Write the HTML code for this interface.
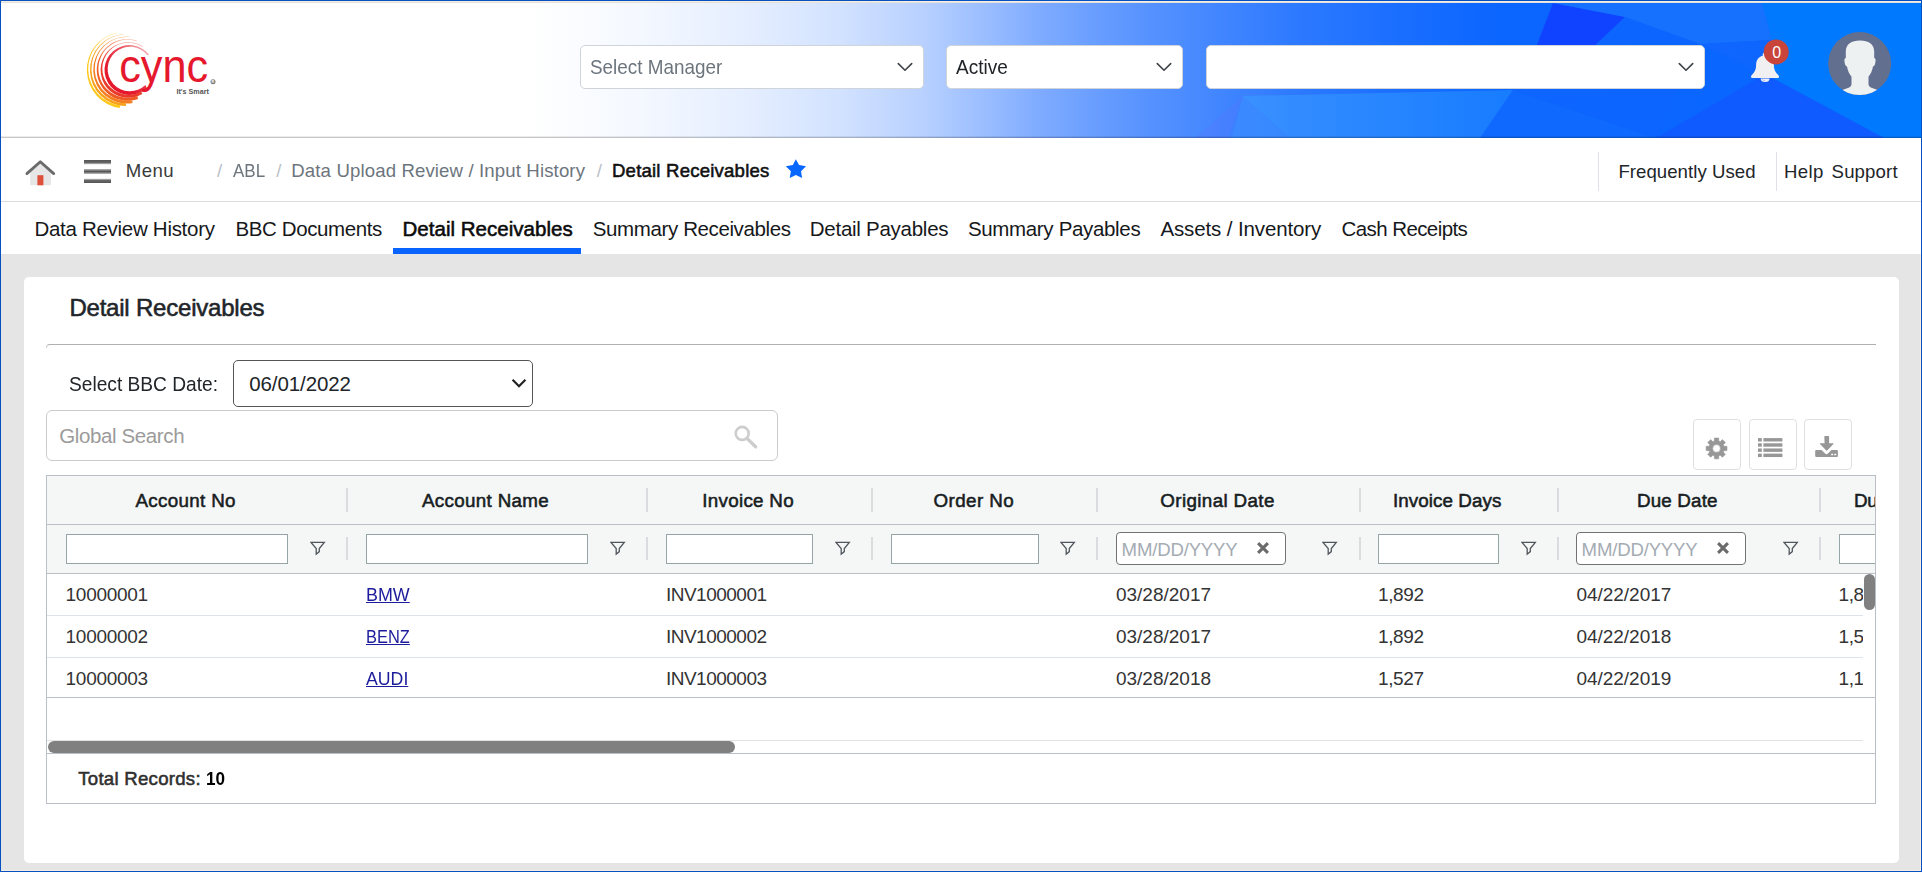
<!DOCTYPE html>
<html lang="en">
<head>
<meta charset="utf-8">
<title>Detail Receivables</title>
<style>
*{box-sizing:border-box;margin:0;padding:0}
html,body{width:1922px;height:872px;overflow:hidden}
body{position:relative;background:#f6eee3;font-family:"Liberation Sans",sans-serif;color:#212529}
.abs,.t{position:absolute}
.t{white-space:nowrap;line-height:1}
/* frame */
#frame{left:0;top:0;width:1922px;height:872px;border:1px solid #0551c2;z-index:50;pointer-events:none}
#page{left:1px;top:254px;width:1919px;height:616px;background:#e5e5e5}
/* header */
#hdr{left:1px;top:3px;width:1920px;height:135px;background:linear-gradient(90deg,#ffffff 0%,#ffffff 27.5%,#f4f8ff 33.3%,#e6efff 38.5%,#d2e2ff 43.7%,#b9d1ff 47.9%,#98bcff 51.5%,#7fabff 54.1%,#6b9fff 56.7%,#5994ff 59.3%,#4a8bff 61.9%,#3d83ff 64.3%,#2c79ff 67.7%,#1a6eff 72.9%,#0b66ff 78%,#0866ff 100%);overflow:hidden}
#hdr-line{left:1px;top:136px;width:1920px;height:2px;background:linear-gradient(rgba(0,0,0,.08) 50%,rgba(0,0,0,.22) 50%)}
.sel{background:#fff;border:1px solid #ced4da;border-radius:5px}
/* nav */
#nav{left:1px;top:138px;width:1920px;height:63px;background:#fff}
#nav-line{left:1px;top:201px;width:1920px;height:1px;background:#dcdcdc}
#tabs{left:1px;top:202px;width:1920px;height:52px;background:#fff}
#tab-ul{left:393px;top:248px;width:188px;height:6px;background:#0863ff}
.vsep{width:1px;background:#dee2e6}
/* card */
#card{left:24px;top:277px;width:1875px;height:586px;background:#fff;border-radius:5px}
#hr{left:46px;top:344px;width:1830px;height:4px;border-top:1px solid #b0b0b0;border-left:1px solid #c9c9c9;border-top-left-radius:5px}
#bbc{left:233px;top:360px;width:300px;height:47px;border:1px solid #555;border-radius:5px;background:#fff}
#gs{left:46px;top:410px;width:732px;height:51px;border:1px solid #cbcbcb;border-radius:6px;background:#fff}
.tbtn{top:419px;width:48px;height:51px;border:1px solid #e0e0e0;border-radius:4px;background:#fff}
/* grid */
#grid{left:46px;top:475px;width:1830px;height:329px;border:1px solid #babfc7;background:#fff;overflow:hidden}
#ghead{left:0;top:0;width:1828px;height:97px;background:#f5f7f7}
.hline{left:0;width:1828px;height:1px;background:#babfc7}
.rline{left:0;width:1816px;height:1px;background:#dde2eb}
.csep{width:2px;background:#d9dde0}
.fin{height:30px;top:58px;border:1px solid #95a5a6;background:#fff}
.din{height:33px;top:56px;border:1px solid #737373;border-radius:4px;background:#fff}
.hd{font-weight:700;font-size:18px;color:#181d1f}
.cell{font-size:17.6px;color:#2b2b2b}
a.cell{color:#2a2aa8;text-decoration:underline}
.ph{font-size:18.4px;color:#a9abb0}
</style>
</head>
<body>
<div id="page" class="abs"></div>
<div class="abs" style="left:1px;top:2px;width:1920px;height:1px;background:#e4e1dc"></div>
<!-- HEADER -->
<div id="hdr" class="abs">
<svg class="abs" style="left:0;top:0" width="1920" height="135" viewBox="1 3 1920 135"><defs>
<linearGradient id="pg1" gradientUnits="userSpaceOnUse" x1="1243" y1="0" x2="1513" y2="0"><stop offset="0" stop-color="#3a93ff"/><stop offset="1" stop-color="#1a80ff"/></linearGradient>
</defs>
<polygon points="1553,3 1625,17 1590,50 1535,50" fill="#1040ff" opacity="0.92"/>
<polygon points="1625,17 1553,3 1762,3 1772,40 1700,44" fill="#1f78ff" opacity="0.6"/>
<polygon points="1625,17 1700,44 1656,138 1513,90 1590,50" fill="#1163ff" opacity="0.45"/>
<polygon points="1243,96 1513,90 1480,138 1232,138" fill="url(#pg1)" opacity="0.85"/>
<polygon points="1243,96 1228,138 1195,138" fill="#5b74ff" opacity="0.28"/>
<polygon points="1243,96 1290,138 1228,138" fill="#3b7fff" opacity="0.35"/>
<polygon points="1513,90 1656,138 1480,138" fill="#146cff" opacity="0.45"/>
<polygon points="1762,3 1921,3 1921,138 1884,138 1765,74 1772,40" fill="#007bff" opacity="0.9"/>
<polygon points="1765,74 1884,138 1656,138" fill="#1259ff" opacity="0.85"/>
<polygon points="1700,44 1772,40 1765,74" fill="#1466ff" opacity="0.6"/></svg>
</div>
<div id="hdr-line" class="abs"></div>
<svg class="abs" style="left:80px;top:26px" width="140" height="90" viewBox="80 26 140 90">
<defs><linearGradient id="lgf" gradientUnits="userSpaceOnUse" x1="150" y1="34" x2="112" y2="72"><stop offset="0" stop-color="#fff" stop-opacity="0.05"/><stop offset="0.55" stop-color="#fff" stop-opacity="0.75"/><stop offset="1" stop-color="#fff" stop-opacity="1"/></linearGradient><mask id="lgm" maskUnits="userSpaceOnUse" x="80" y="26" width="140" height="90"><rect x="80" y="26" width="140" height="90" fill="url(#lgf)"/></mask></defs>
<path d="M149.02 54.67 A24.90 24.90 0 1 0 146.70 87.91 L145.41 85.07 A22.30 22.30 0 1 1 147.49 55.30 Z" fill="#e5182d" mask="url(#lgm)"/>
<path d="M143.20 46.38 A27.85 27.85 0 1 0 142.37 94.12 L141.23 91.14 A25.95 25.95 0 1 1 142.01 46.66 Z" fill="#e93a2b" mask="url(#lgm)"/>
<path d="M137.09 40.71 A30.80 30.80 0 1 0 138.11 98.94 L137.31 95.96 A29.00 29.00 0 1 1 136.35 41.13 Z" fill="#ee5b25" mask="url(#lgm)"/>
<path d="M130.27 36.63 A33.55 33.55 0 1 0 132.59 103.04 L132.12 100.13 A31.85 31.85 0 1 1 129.92 37.09 Z" fill="#f37d20" mask="url(#lgm)"/>
<path d="M123.49 33.99 A36.10 36.10 0 0 0 126.01 106.10 L125.84 103.31 A34.50 34.50 0 0 1 123.43 34.40 Z" fill="#f8a21c" mask="url(#lgm)"/>
<path d="M117.32 32.39 A38.45 38.45 0 0 0 119.96 108.08 L120.02 105.50 A36.95 36.95 0 0 1 117.48 32.77 Z" fill="#fdc81a" mask="url(#lgm)"/>
<text x="119.2" y="82" font-family="Liberation Sans, sans-serif" font-size="47" fill="#e5182d" textLength="89" lengthAdjust="spacingAndGlyphs">cync</text>
<text x="176.4" y="94" font-family="Liberation Sans, sans-serif" font-size="6.6" font-weight="700" fill="#555" textLength="32.5" lengthAdjust="spacingAndGlyphs">It's Smart</text>
<circle cx="213" cy="81.8" r="2.5" fill="#7d7d7d"/>
<text x="211.6" y="82.9" font-family="Liberation Sans, sans-serif" font-size="3.6" font-weight="700" fill="#fff">R</text>
</svg>
<div class="abs sel" style="left:580px;top:45px;width:344px;height:44px"></div>
<div class="abs sel" style="left:946px;top:45px;width:237px;height:44px"></div>
<div class="abs sel" style="left:1206px;top:45px;width:499px;height:44px"></div>
<svg class="abs" style="left:896px;top:61px" width="18" height="12" viewBox="896 61 18 12"><path d="M898.3 63.6 L905 70.2 L911.7 63.6" fill="none" stroke="#3d4348" stroke-width="1.6" stroke-linecap="round" stroke-linejoin="round"/></svg>
<svg class="abs" style="left:1155px;top:61px" width="18" height="12" viewBox="1155 61 18 12"><path d="M1157.3 63.6 L1164 70.2 L1170.7 63.6" fill="none" stroke="#3d4348" stroke-width="1.6" stroke-linecap="round" stroke-linejoin="round"/></svg>
<svg class="abs" style="left:1677px;top:61px" width="18" height="12" viewBox="1677 61 18 12"><path d="M1679.3 63.6 L1686 70.2 L1692.7 63.6" fill="none" stroke="#3d4348" stroke-width="1.6" stroke-linecap="round" stroke-linejoin="round"/></svg>
<svg class="abs" style="left:1745px;top:30px" width="150" height="70" viewBox="1745 30 150 70">
<path d="M1765 52.6 c-1.4 0 -2.3 1 -2.3 2.2 v1 c-4.3 1.1 -6.6 4.6 -6.6 9.3 c0 5 -1.7 7.300 -3.9 9.500 c-0.700 0.700 -1.200 1.300 -1.200 2.100 c0 0.800 0.600 1.300 1.500 1.300 h25 c0.900 0 1.500 -0.500 1.500 -1.300 c0 -0.800 -0.500 -1.400 -1.200 -2.100 c-2.200 -2.200 -3.900 -4.500 -3.900 -9.500 c0 -4.700 -2.300 -8.200 -6.600 -9.300 v-1 c0 -1.200 -0.900 -2.200 -2.300 -2.200 z" fill="#f0f0f3"/>
<path d="M1760.7 78.600 a4.400 3.500 0 0 0 8.800 0 z" fill="#f0f0f3"/>
<path d="M1762.200 78.800 a3 2.200 0 0 0 3.200 2" fill="none" stroke="#7aa2ee" stroke-width="0.500"/>
<circle cx="1776.2" cy="51.9" r="12.5" fill="#c9443b"/>
<circle cx="1859.7" cy="63.6" r="31.5" fill="#636f8f"/>
<clipPath id="avc"><circle cx="1859.7" cy="63.6" r="31.5"/></clipPath>
<g clip-path="url(#avc)" fill="#eef1f2">
<path d="M1860 40.500 c8.500 0 14.200 3.800 14.200 11 v6.500 c1.400 0.400 1.600 1.800 1.200 4.200 c-0.400 2.400 -1 4 -2.400 4.300 c-0.800 4.200 -2.300 7.500 -4.500 10.200 v7.300 c0 2.200 1.600 3.400 5 4.600 c4.500 1.600 9.500 3.400 12 5.400 v12 h-51 v-12 c2.500 -2 7.500 -3.800 12 -5.400 c3.400 -1.200 5 -2.400 5 -4.600 v-7.300 c-2.200 -2.700 -3.700 -6 -4.500 -10.200 c-1.400 -0.300 -2 -1.900 -2.400 -4.300 c-0.400 -2.400 -0.200 -3.800 1.200 -4.200 v-6.500 c0 -7.200 5.700 -11 14.200 -11 z"/>
</g>
</svg>

<!-- NAV -->
<div id="nav" class="abs"></div>
<div id="nav-line" class="abs"></div>
<svg class="abs" style="left:22px;top:156px" width="96" height="34" viewBox="22 156 96 34">
<polygon points="30.2,185.2 30.2,172 40.3,162.6 50.9,172 50.9,185.2" fill="#e6e6e6"/>
<rect x="37.4" y="175.2" width="6" height="10.1" fill="#de4f3c"/>
<path d="M26.9 173.6 L40.3 161.7 L53.7 173.6" fill="none" stroke="#6a6a6a" stroke-width="2.8" stroke-linecap="round" stroke-linejoin="round"/>
<defs>
<linearGradient id="hb1" x1="0" y1="0" x2="0" y2="1"><stop offset="0" stop-color="#555"/><stop offset=".6" stop-color="#666"/><stop offset="1" stop-color="#d8d8d8"/></linearGradient>
<linearGradient id="hb2" x1="0" y1="0" x2="0" y2="1"><stop offset="0" stop-color="#bbb"/><stop offset=".5" stop-color="#555"/><stop offset="1" stop-color="#bbb"/></linearGradient>
<linearGradient id="hb3" x1="0" y1="0" x2="0" y2="1"><stop offset="0" stop-color="#d8d8d8"/><stop offset=".4" stop-color="#666"/><stop offset="1" stop-color="#555"/></linearGradient>
</defs>
<rect x="84" y="160" width="27" height="4.4" fill="url(#hb1)"/>
<rect x="84" y="169" width="27" height="5" fill="url(#hb2)"/>
<rect x="84" y="178.600" width="27" height="4.4" fill="url(#hb3)"/>
</svg>
<svg class="abs" style="left:784px;top:157px" width="24" height="24" viewBox="784 157 24 24"><polygon points="795.8,159.2 799.1,164.9 806,166.3 801,171.3 802.100,178 795.9,175 789.7,178 790.9,171.3 785.8,166.3 792.9,164.900" fill="#0767ff"/></svg>
<div class="abs vsep" style="left:1598px;top:152px;height:39px"></div>
<div class="abs vsep" style="left:1776px;top:152px;height:39px"></div>

<!-- TABS -->
<div id="tabs" class="abs"></div>
<div id="tab-ul" class="abs"></div>

<!-- CARD -->
<div id="card" class="abs"></div>
<div id="hr" class="abs"></div>
<div id="bbc" class="abs"></div>
<div id="gs" class="abs"></div>
<div class="abs tbtn" style="left:1693px"></div>
<div class="abs tbtn" style="left:1749px"></div>
<div class="abs tbtn" style="left:1804px"></div>
<svg class="abs" style="left:1700px;top:430px" width="145" height="34" viewBox="1700 430 145 34"><path d="M1714.36 441.07 L1714.44 438.06 L1718.66 438.06 L1718.74 441.07 L1720.22 441.68 L1722.40 439.61 L1725.39 442.60 L1723.32 444.78 L1723.93 446.26 L1726.94 446.34 L1726.94 450.56 L1723.93 450.64 L1723.32 452.12 L1725.39 454.30 L1722.40 457.29 L1720.22 455.22 L1718.74 455.83 L1718.66 458.84 L1714.44 458.84 L1714.36 455.83 L1712.88 455.22 L1710.70 457.29 L1707.71 454.30 L1709.78 452.12 L1709.17 450.64 L1706.16 450.56 L1706.16 446.34 L1709.17 446.26 L1709.78 444.78 L1707.71 442.60 L1710.70 439.61 L1712.88 441.68 Z M1720.45 448.45 A3.9 3.9 0 1 0 1712.65 448.45 A3.9 3.9 0 1 0 1720.45 448.45 Z" fill="#979797" fill-rule="evenodd" stroke="#979797" stroke-width="0.6" stroke-linejoin="round"/><rect x="1758" y="438.10" width="3.8" height="3.4" fill="#979797"/><rect x="1763.4" y="438.10" width="19" height="3.4" fill="#979797"/><rect x="1758" y="443.28" width="3.8" height="3.4" fill="#979797"/><rect x="1763.4" y="443.28" width="19" height="3.4" fill="#979797"/><rect x="1758" y="448.46" width="3.8" height="3.4" fill="#979797"/><rect x="1763.4" y="448.46" width="19" height="3.4" fill="#979797"/><rect x="1758" y="453.64" width="3.8" height="3.4" fill="#979797"/><rect x="1763.4" y="453.64" width="19" height="3.4" fill="#979797"/><path d="M1824.300 436.8 a0.700 0.700 0 0 1 0.700 -0.700 h3.400 a0.700 0.700 0 0 1 0.700 0.700 v6.400 h4 a0.500 0.500 0 0 1 0.350 0.850 l-6.300 6.500 a0.600 0.600 0 0 1 -0.860 0 l-6.300 -6.500 a0.500 0.500 0 0 1 0.350 -0.850 h4.260 z" fill="#979797"/>
<path d="M1816.200 450 h5.300 l3.600 3.600 a2 2 0 0 0 2.800 0 l3.600 -3.600 h5.400 a1 1 0 0 1 1 1 v5 a1 1 0 0 1 -1 1 h-20.700 a1 1 0 0 1 -1 -1 v-5 a1 1 0 0 1 1 -1 z M1831.200 453.700 v1.500 h1.900 v-1.500 z M1834.300 453.700 v1.500 h1.900 v-1.500 z" fill="#979797" fill-rule="evenodd"/></svg>
<svg class="abs" style="left:510px;top:377px" width="18" height="13" viewBox="510 377 18 13"><path d="M512.600 379.800 L519 386.200 L525.400 379.800" fill="none" stroke="#222" stroke-width="2.200" stroke-linecap="butt" stroke-linejoin="miter"/></svg>
<svg class="abs" style="left:730px;top:422px" width="30" height="30" viewBox="730 422 30 30"><circle cx="742.2" cy="433.400" r="6.500" fill="none" stroke="#cdcdcd" stroke-width="2.600"/><path d="M747.200 438.600 L755.600 446.800" stroke="#cdcdcd" stroke-width="3.400" stroke-linecap="round"/></svg>

<!-- GRID -->
<div id="grid" class="abs">
<div id="ghead" class="abs"></div>
<div class="abs hline" style="top:48px"></div>
<div class="abs hline" style="top:97px"></div>
<div class="abs csep" style="left:299px;top:12px;height:24px"></div>
<div class="abs csep" style="left:299px;top:61px;height:23px"></div>
<div class="abs csep" style="left:599px;top:12px;height:24px"></div>
<div class="abs csep" style="left:599px;top:61px;height:23px"></div>
<div class="abs csep" style="left:824px;top:12px;height:24px"></div>
<div class="abs csep" style="left:824px;top:61px;height:23px"></div>
<div class="abs csep" style="left:1049px;top:12px;height:24px"></div>
<div class="abs csep" style="left:1049px;top:61px;height:23px"></div>
<div class="abs csep" style="left:1311.5px;top:12px;height:24px"></div>
<div class="abs csep" style="left:1311.5px;top:61px;height:23px"></div>
<div class="abs csep" style="left:1510px;top:12px;height:24px"></div>
<div class="abs csep" style="left:1510px;top:61px;height:23px"></div>
<div class="abs csep" style="left:1772px;top:12px;height:24px"></div>
<div class="abs csep" style="left:1772px;top:61px;height:23px"></div>
<div class="abs fin" style="left:19.25px;width:222.0px"></div>
<div class="abs fin" style="left:319.25px;width:222.0px"></div>
<div class="abs fin" style="left:619px;width:147px"></div>
<div class="abs fin" style="left:844.25px;width:147.25px"></div>
<div class="abs fin" style="left:1331.25px;width:120.25px"></div>
<div class="abs fin" style="left:1792px;width:151px"></div>
<div class="abs din" style="left:1069px;width:170px"></div>
<svg class="abs" style="left:1209.85px;top:66.1px" width="12" height="12" viewBox="0 0 12 12"><path d="M1.1 1.1 L10.9 10.9 M10.9 1.1 L1.1 10.9" stroke="#6b6b6b" stroke-width="3" fill="none"/></svg>
<div class="abs din" style="left:1529px;width:170px"></div>
<svg class="abs" style="left:1669.85px;top:66.1px" width="12" height="12" viewBox="0 0 12 12"><path d="M1.1 1.1 L10.9 10.9 M10.9 1.1 L1.1 10.9" stroke="#6b6b6b" stroke-width="3" fill="none"/></svg>
<svg class="abs" style="left:262.5px;top:64.7px" width="16" height="16" viewBox="0 0 16 16"><path d="M1.0 1.35 H14.3 L9.3 7.5 V10.6 L6.2 13.2 V7.5 Z" fill="none" stroke="#50565b" stroke-width="1.3" stroke-linejoin="miter"/></svg>
<svg class="abs" style="left:562.5px;top:64.7px" width="16" height="16" viewBox="0 0 16 16"><path d="M1.0 1.35 H14.3 L9.3 7.5 V10.6 L6.2 13.2 V7.5 Z" fill="none" stroke="#50565b" stroke-width="1.3" stroke-linejoin="miter"/></svg>
<svg class="abs" style="left:787.5px;top:64.7px" width="16" height="16" viewBox="0 0 16 16"><path d="M1.0 1.35 H14.3 L9.3 7.5 V10.6 L6.2 13.2 V7.5 Z" fill="none" stroke="#50565b" stroke-width="1.3" stroke-linejoin="miter"/></svg>
<svg class="abs" style="left:1012.5px;top:64.7px" width="16" height="16" viewBox="0 0 16 16"><path d="M1.0 1.35 H14.3 L9.3 7.5 V10.6 L6.2 13.2 V7.5 Z" fill="none" stroke="#50565b" stroke-width="1.3" stroke-linejoin="miter"/></svg>
<svg class="abs" style="left:1275.0px;top:64.7px" width="16" height="16" viewBox="0 0 16 16"><path d="M1.0 1.35 H14.3 L9.3 7.5 V10.6 L6.2 13.2 V7.5 Z" fill="none" stroke="#50565b" stroke-width="1.3" stroke-linejoin="miter"/></svg>
<svg class="abs" style="left:1473.5px;top:64.7px" width="16" height="16" viewBox="0 0 16 16"><path d="M1.0 1.35 H14.3 L9.3 7.5 V10.6 L6.2 13.2 V7.5 Z" fill="none" stroke="#50565b" stroke-width="1.3" stroke-linejoin="miter"/></svg>
<svg class="abs" style="left:1735.5px;top:64.7px" width="16" height="16" viewBox="0 0 16 16"><path d="M1.0 1.35 H14.3 L9.3 7.5 V10.6 L6.2 13.2 V7.5 Z" fill="none" stroke="#50565b" stroke-width="1.3" stroke-linejoin="miter"/></svg>
<span class="t" style="left:88.47px;top:16.00px;font-size:18.8px;-webkit-text-stroke:0.55px;color:#181d1f;letter-spacing:0.334px">Account No</span>
<span class="t" style="left:374.88px;top:16.00px;font-size:18.8px;-webkit-text-stroke:0.55px;color:#181d1f;letter-spacing:0.338px">Account Name</span>
<span class="t" style="left:655.27px;top:16.00px;font-size:18.8px;-webkit-text-stroke:0.55px;color:#181d1f;letter-spacing:0.296px">Invoice No</span>
<span class="t" style="left:886.52px;top:16.00px;font-size:18.8px;-webkit-text-stroke:0.55px;color:#181d1f;letter-spacing:0.416px">Order No</span>
<span class="t" style="left:1113.28px;top:16.00px;font-size:18.8px;-webkit-text-stroke:0.55px;color:#181d1f;letter-spacing:0.378px">Original Date</span>
<span class="t" style="left:1346.03px;top:16.00px;font-size:18.8px;-webkit-text-stroke:0.55px;color:#181d1f;letter-spacing:0.075px">Invoice Days</span>
<span class="t" style="left:1589.88px;top:16.00px;font-size:18.8px;-webkit-text-stroke:0.55px;color:#181d1f;letter-spacing:0.193px">Due Date</span>
<span class="t" style="left:1806.98px;top:16.00px;font-size:18.8px;-webkit-text-stroke:0.55px;color:#181d1f;letter-spacing:-0.332px">Due Days</span>
<span class="t" style="left:1074.60px;top:65.00px;font-size:18.6px;color:#a4abb3;letter-spacing:-0.186px">MM/DD/YYYY</span>
<span class="t" style="left:1534.60px;top:65.00px;font-size:18.6px;color:#a4abb3;letter-spacing:-0.186px">MM/DD/YYYY</span>
<span class="t" style="left:31.28px;top:294.00px;font-size:18.6px;-webkit-text-stroke:0.55px;color:#2f2f2f;letter-spacing:0.267px">Total Records:</span>
<span class="t" style="left:159.28px;top:294.00px;font-size:18.6px;font-weight:700;color:#000;letter-spacing:0.000px;transform:scaleX(0.9203);transform-origin:0 50%">10</span>
<span class="t" style="left:18.62px;top:109.00px;font-size:19.0px;color:#333;letter-spacing:-0.308px">10000001</span>
<a class="t" style="left:319.11px;top:109.00px;font-size:19.0px;color:#1c1c9c;letter-spacing:0.000px;text-decoration:underline;transform:scaleX(0.9418);transform-origin:0 50%">BMW</a>
<span class="t" style="left:618.90px;top:109.00px;font-size:19.0px;color:#333;letter-spacing:-0.499px">INV1000001</span>
<span class="t" style="left:1068.90px;top:109.00px;font-size:19.0px;color:#333;letter-spacing:0.008px">03/28/2017</span>
<span class="t" style="left:1331.02px;top:109.00px;font-size:19.0px;color:#333;letter-spacing:-0.400px">1,892</span>
<span class="t" style="left:1529.50px;top:109.00px;font-size:19.0px;color:#333;letter-spacing:-0.036px">04/22/2017</span>
<span class="t" style="left:1791.52px;top:109.00px;font-size:19.0px;color:#333;letter-spacing:-0.400px">1,892</span>
<span class="t" style="left:18.62px;top:151.00px;font-size:19.0px;color:#333;letter-spacing:-0.308px">10000002</span>
<a class="t" style="left:319.14px;top:151.00px;font-size:19.0px;color:#1c1c9c;letter-spacing:0.000px;text-decoration:underline;transform:scaleX(0.8648);transform-origin:0 50%">BENZ</a>
<span class="t" style="left:618.90px;top:151.00px;font-size:19.0px;color:#333;letter-spacing:-0.499px">INV1000002</span>
<span class="t" style="left:1068.90px;top:151.00px;font-size:19.0px;color:#333;letter-spacing:0.008px">03/28/2017</span>
<span class="t" style="left:1331.02px;top:151.00px;font-size:19.0px;color:#333;letter-spacing:-0.400px">1,892</span>
<span class="t" style="left:1529.50px;top:151.00px;font-size:19.0px;color:#333;letter-spacing:-0.036px">04/22/2018</span>
<span class="t" style="left:1791.52px;top:151.00px;font-size:19.0px;color:#333;letter-spacing:-0.400px">1,527</span>
<span class="t" style="left:18.62px;top:193.00px;font-size:19.0px;color:#333;letter-spacing:-0.308px">10000003</span>
<a class="t" style="left:318.80px;top:193.00px;font-size:19.0px;color:#1c1c9c;letter-spacing:0.000px;text-decoration:underline;transform:scaleX(0.9317);transform-origin:0 50%">AUDI</a>
<span class="t" style="left:618.90px;top:193.00px;font-size:19.0px;color:#333;letter-spacing:-0.499px">INV1000003</span>
<span class="t" style="left:1068.90px;top:193.00px;font-size:19.0px;color:#333;letter-spacing:0.008px">03/28/2018</span>
<span class="t" style="left:1331.02px;top:193.00px;font-size:19.0px;color:#333;letter-spacing:-0.400px">1,527</span>
<span class="t" style="left:1529.50px;top:193.00px;font-size:19.0px;color:#333;letter-spacing:-0.036px">04/22/2019</span>
<span class="t" style="left:1791.52px;top:193.00px;font-size:19.0px;color:#333;letter-spacing:-0.400px">1,162</span>
<div class="abs rline" style="top:139px"></div>
<div class="abs rline" style="top:181px"></div>
<div class="abs hline" style="top:221px"></div>
<div class="abs" style="left:1816px;top:98px;width:13px;height:123px;background:#fff"></div>
<div class="abs" style="left:1816.5px;top:98px;width:11.5px;height:36px;border-radius:6px;background:#808080"></div>
<div class="abs" style="left:0;top:264px;width:1816px;height:1px;background:#e2e2e2"></div>
<div class="abs" style="left:1px;top:265px;width:687px;height:12px;border-radius:6px;background:#808080"></div>
<div class="abs hline" style="top:277px"></div>
</div>
<span class="t" style="left:589.60px;top:57.00px;font-size:20.4px;color:#6c757d;letter-spacing:0.000px;transform:scaleX(0.9257);transform-origin:0 50%">Select Manager</span>
<span class="t" style="left:955.60px;top:57.00px;font-size:20.4px;color:#212529;letter-spacing:0.000px;transform:scaleX(0.9314);transform-origin:0 50%">Active</span>
<span class="t" style="left:1772.30px;top:45.00px;font-size:16px;color:#fff;letter-spacing:0.000px">0</span>
<span class="t" style="left:125.70px;top:162.00px;font-size:18.6px;color:#3a3a3a;letter-spacing:0.476px">Menu</span>
<span class="t" style="left:217.00px;top:162.00px;font-size:18.6px;color:#b9c0c9;letter-spacing:0.000px">/</span>
<span class="t" style="left:233.10px;top:162.00px;font-size:18.6px;color:#6c757d;letter-spacing:0.000px;transform:scaleX(0.9137);transform-origin:0 50%">ABL</span>
<span class="t" style="left:276.30px;top:162.00px;font-size:18.6px;color:#b9c0c9;letter-spacing:0.000px">/</span>
<span class="t" style="left:291.30px;top:162.00px;font-size:18.6px;color:#6c757d;letter-spacing:0.131px">Data Upload Review / Input History</span>
<span class="t" style="left:596.70px;top:162.00px;font-size:18.6px;color:#b9c0c9;letter-spacing:0.000px">/</span>
<span class="t" style="left:611.98px;top:162.00px;font-size:18.6px;-webkit-text-stroke:0.55px;color:#111;letter-spacing:0.198px">Detail Receivables</span>
<span class="t" style="left:1618.40px;top:163.00px;font-size:18.6px;color:#212529;letter-spacing:0.051px">Frequently Used</span>
<span class="t" style="left:1784.10px;top:163.00px;font-size:18.6px;color:#212529;letter-spacing:0.333px">Help</span>
<span class="t" style="left:1831.60px;top:163.00px;font-size:18.6px;color:#212529;letter-spacing:0.140px">Support</span>
<span class="t" style="left:34.40px;top:219.00px;font-size:20.5px;color:#16181b;letter-spacing:-0.286px">Data Review History</span>
<span class="t" style="left:235.50px;top:219.00px;font-size:20.5px;color:#16181b;letter-spacing:-0.398px">BBC Documents</span>
<span class="t" style="left:402.52px;top:219.00px;font-size:20.5px;-webkit-text-stroke:0.55px;color:#0b0b0b;letter-spacing:0.022px">Detail Receivables</span>
<span class="t" style="left:592.80px;top:219.00px;font-size:20.5px;color:#16181b;letter-spacing:-0.384px">Summary Receivables</span>
<span class="t" style="left:809.80px;top:219.00px;font-size:20.5px;color:#16181b;letter-spacing:-0.263px">Detail Payables</span>
<span class="t" style="left:967.90px;top:219.00px;font-size:20.5px;color:#16181b;letter-spacing:-0.332px">Summary Payables</span>
<span class="t" style="left:1160.40px;top:219.00px;font-size:20.5px;color:#16181b;letter-spacing:-0.122px">Assets / Inventory</span>
<span class="t" style="left:1341.50px;top:219.00px;font-size:20.5px;color:#16181b;letter-spacing:-0.580px">Cash Receipts</span>
<span class="t" style="left:69.38px;top:296.00px;font-size:24px;-webkit-text-stroke:0.55px;color:#212529;letter-spacing:-0.207px">Detail Receivables</span>
<span class="t" style="left:69.05px;top:374.00px;font-size:20.5px;color:#212529;letter-spacing:0.000px;transform:scaleX(0.9343);transform-origin:0 50%">Select BBC Date:</span>
<span class="t" style="left:249.20px;top:374.00px;font-size:20.5px;color:#212529;letter-spacing:-0.089px">06/01/2022</span>
<span class="t" style="left:59.20px;top:426.00px;font-size:20.5px;color:#9b9b9b;letter-spacing:-0.375px">Global Search</span>
<div id="frame" class="abs"></div>
</body>
</html>
